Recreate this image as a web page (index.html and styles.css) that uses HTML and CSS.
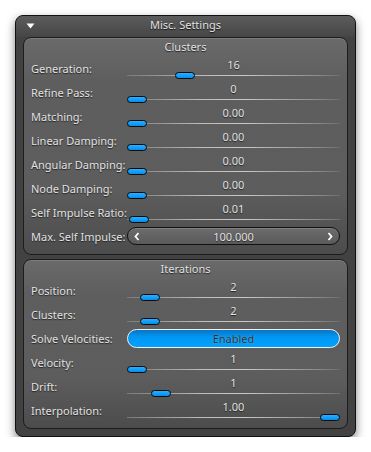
FILE: index.html
```html
<!DOCTYPE html>
<html lang="en">
<head>
    <meta charset="UTF-8">
    <title>Misc. Settings</title>
    <link rel="stylesheet" href="styles.css">
</head>
<body>
    <div class="panel">
        <div class="panel-title">
            <svg class="toggle" width="9" height="6" viewBox="0 0 9 6"><path d="M0.5 0.5 L8.5 0.5 L4.5 5.5 Z" fill="#fff"/></svg>
            Misc. Settings
        </div>

        <div class="group">
            <div class="group-title">Clusters</div>
            <div class="row">
                <span class="label">Generation:</span>
                <div class="slider"><span class="value">16</span><span class="track"></span><span class="handle" style="left: 48px"></span></div>
            </div>
            <div class="row">
                <span class="label">Refine Pass:</span>
                <div class="slider"><span class="value">0</span><span class="track"></span><span class="handle" style="left: 0px"></span></div>
            </div>
            <div class="row">
                <span class="label">Matching:</span>
                <div class="slider"><span class="value">0.00</span><span class="track"></span><span class="handle" style="left: 0px"></span></div>
            </div>
            <div class="row">
                <span class="label">Linear Damping:</span>
                <div class="slider"><span class="value">0.00</span><span class="track"></span><span class="handle" style="left: 0px"></span></div>
            </div>
            <div class="row">
                <span class="label">Angular Damping:</span>
                <div class="slider"><span class="value">0.00</span><span class="track"></span><span class="handle" style="left: 0px"></span></div>
            </div>
            <div class="row">
                <span class="label">Node Damping:</span>
                <div class="slider"><span class="value">0.00</span><span class="track"></span><span class="handle" style="left: 0px"></span></div>
            </div>
            <div class="row">
                <span class="label">Self Impulse Ratio:</span>
                <div class="slider"><span class="value">0.01</span><span class="track"></span><span class="handle" style="left: 2px"></span></div>
            </div>
            <div class="row">
                <span class="label">Max. Self Impulse:</span>
                <div class="spin">
                    <svg class="arrow" width="6" height="9" viewBox="0 0 6 9"><path d="M4.5 1 L1.5 4.5 L4.5 8" fill="none" stroke="#fff" stroke-width="1.8"/></svg>
                    <span class="spin-value">100.000</span>
                    <svg class="arrow" width="6" height="9" viewBox="0 0 6 9"><path d="M1.5 1 L4.5 4.5 L1.5 8" fill="none" stroke="#fff" stroke-width="1.8"/></svg>
                </div>
            </div>
        </div>

        <div class="group">
            <div class="group-title">Iterations</div>
            <div class="row">
                <span class="label">Position:</span>
                <div class="slider"><span class="value">2</span><span class="track"></span><span class="handle" style="left: 13px"></span></div>
            </div>
            <div class="row">
                <span class="label">Clusters:</span>
                <div class="slider"><span class="value">2</span><span class="track"></span><span class="handle" style="left: 13px"></span></div>
            </div>
            <div class="row">
                <span class="label">Solve Velocities:</span>
                <div class="toggle-button">Enabled</div>
            </div>
            <div class="row">
                <span class="label">Velocity:</span>
                <div class="slider"><span class="value">1</span><span class="track"></span><span class="handle" style="left: 0px"></span></div>
            </div>
            <div class="row">
                <span class="label">Drift:</span>
                <div class="slider"><span class="value">1</span><span class="track"></span><span class="handle" style="left: 24px"></span></div>
            </div>
            <div class="row">
                <span class="label">Interpolation:</span>
                <div class="slider"><span class="value">1.00</span><span class="track"></span><span class="handle" style="left: 193px"></span></div>
            </div>
        </div>
    </div>
</body>
</html>
```

FILE: styles.css
```css
body {
    margin: 0;
    background: #fff;
    font-family: "Noto Sans", "DejaVu Sans", sans-serif;
    font-size: 11px;
    color: #e2e2e2;
}
.panel {
    margin: 15px 0 0 15px;
    width: 339px;
    padding: 0 0 7px;
    border: 1px solid #111;
    border-radius: 8px;
    background: #424242;
    box-shadow: 0 4px 10px rgba(0, 0, 0, 0.5);
}
.panel-title {
    position: relative;
    height: 21px;
    line-height: 18px;
    text-align: center;
    border-radius: 7px 7px 0 0;
    background: linear-gradient(#5c5c5c, #464646);
    text-shadow: 0 1px 1px #111;
}
.toggle {
    position: absolute;
    left: 10px;
    top: 7px;
}
.group {
    margin: 0 7px;
    padding: 0 7px 6px 7px;
    border: 1px solid #1c1c1c;
    border-radius: 8px;
    background: linear-gradient(#6a6a6a, #5e5e5e 20%, #5d5d5d 70%, #4c4c4c);
    box-shadow: inset 0 1px 0 rgba(255, 255, 255, 0.12);
}
.group + .group {
    margin-top: 4px;
}
.group-title {
    height: 18px;
    line-height: 18px;
    text-align: center;
    text-shadow: 0 1px 1px #222;
}
.row {
    display: flex;
    align-items: center;
    height: 24px;
}
.label {
    width: 96px;
    flex: none;
    white-space: nowrap;
    text-shadow: 0 1px 1px #222;
}
.slider {
    position: relative;
    width: 213px;
    height: 24px;
}
.value {
    position: absolute;
    left: 0;
    right: 0;
    top: 2px;
    line-height: 14px;
    text-align: center;
    text-shadow: 0 1px 1px #222;
}
.track {
    position: absolute;
    left: 0;
    right: 0;
    top: 19px;
    height: 1px;
    background: linear-gradient(to right, #7a7a7a, #bdbdbd 35%, #c8c8c8 55%, #8a8a8a 90%, #6e6e6e);
}
.handle {
    position: absolute;
    top: 16px;
    width: 18px;
    height: 5px;
    border: 1px solid #0a0a0a;
    border-radius: 4px;
    background: linear-gradient(#2aaeff, #0090f0);
}
.spin {
    display: flex;
    align-items: center;
    width: 199px;
    height: 16px;
    padding: 0 6px;
    border: 1px solid #111;
    border-radius: 9px;
    background: linear-gradient(#6c6c6c, #5a5a5a);
    box-shadow: inset 0 1px 0 rgba(255, 255, 255, 0.15);
}
.arrow {
    flex: none;
}
.spin-value {
    flex: 1;
    text-align: center;
    text-shadow: 0 1px 1px #222;
}
.toggle-button {
    width: 211px;
    height: 17px;
    line-height: 17px;
    text-align: center;
    border: 1px solid #f0f0f0;
    border-radius: 10px;
    background: linear-gradient(#0a74c4, #0096f0 40%, #00a2ff);
    color: #2a2a2a;
    text-shadow: 0 0 1px rgba(255, 255, 255, 0.5);
}
```
